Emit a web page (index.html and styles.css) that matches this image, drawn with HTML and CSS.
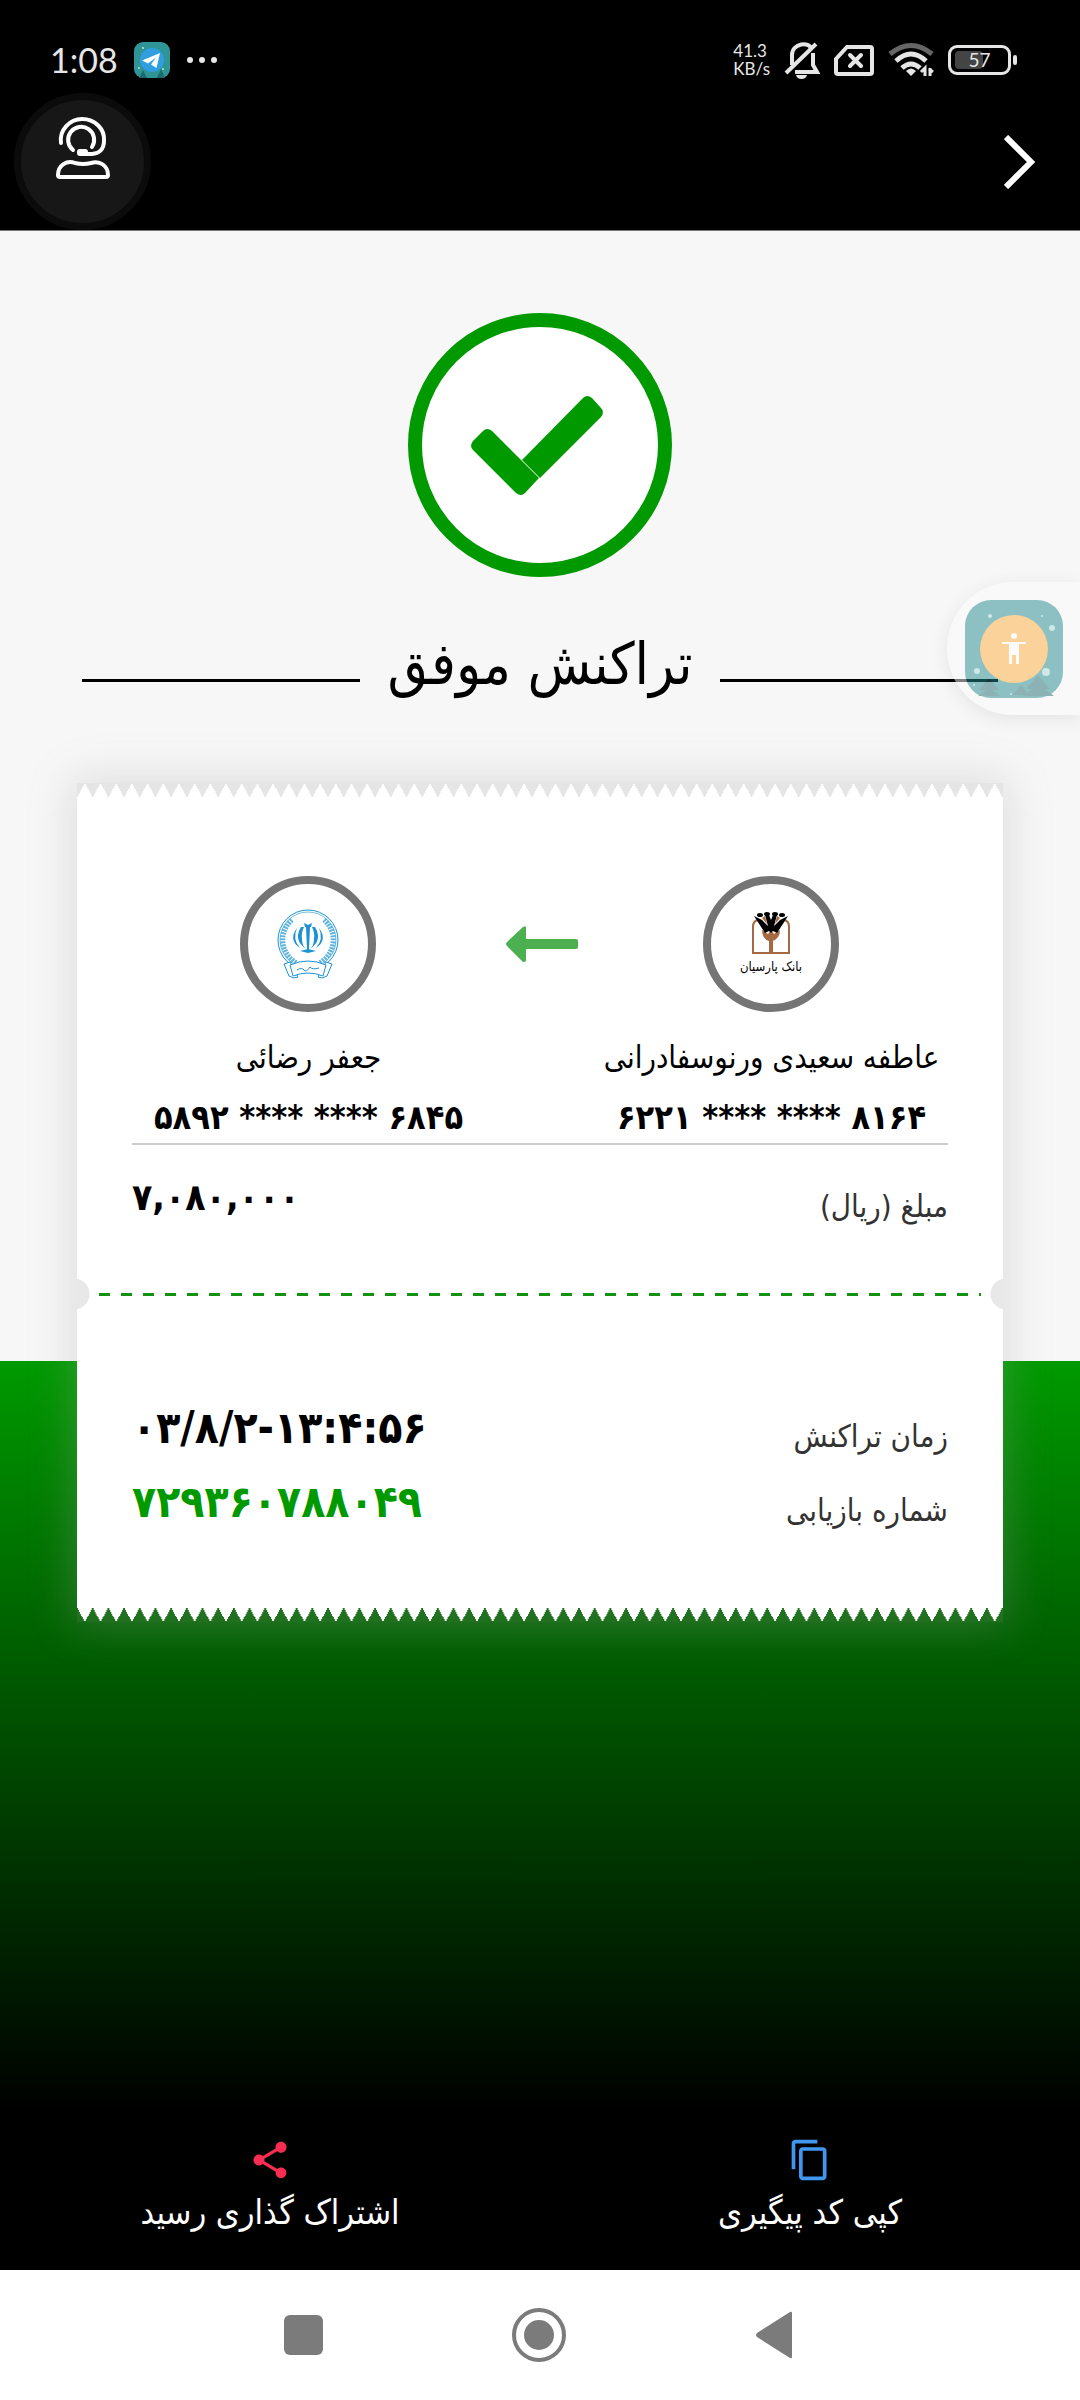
FILE: index.html
```html
<!DOCTYPE html>
<html lang="fa" dir="rtl">
<head>
<meta charset="utf-8">
<meta name="viewport" content="width=device-width, initial-scale=1">
<title>تراکنش موفق</title>
<link rel="stylesheet" href="styles.css">
</head>
<body>
<header class="top">
  <div class="status" dir="ltr">
    <div class="status-side status-start">
      <time class="clock">1:08</time>
      <svg class="app-badge" viewBox="0 0 36 36" aria-hidden="true"><rect width="36" height="36" rx="9" fill="#2f9496"/><path d="M5 36l4-8 4 8zM23 36l4-9 4 9z" fill="#1c6a70"/><circle cx="18" cy="18" r="12" fill="#2f9fe0"/><path d="M8 18.500L26 11l-3.500 15-5.500-3.500 5-7-8 6z" fill="#fff"/><circle cx="9" cy="6" r="1" fill="#bfe3e4"/><circle cx="5" cy="26" r="1" fill="#bfe3e4"/><circle cx="29" cy="27" r="1" fill="#bfe3e4"/></svg>
      <svg class="dots" viewBox="0 0 32 8" aria-hidden="true"><g fill="#e6e6e6"><circle cx="4" cy="4" r="3"/><circle cx="16" cy="4" r="3"/><circle cx="28" cy="4" r="3"/></g></svg>
    </div>
    <div class="status-side status-end">
      <span class="speed"><span>41.3</span><span>KB/s</span></span>
      <svg class="bell" viewBox="0 0 36 38" fill="none" stroke="#e6e6e6" stroke-width="4" aria-hidden="true"><path d="M8 24V14C8 2 26 0 27 8M29 12v12l4 7H11"/><path d="M2 32L32 3" stroke-width="4"/><path d="M12 34h11q-1 4-5.500 4t-5.500-4z" fill="#e6e6e6" stroke="none"/></svg>
      <svg class="sim" viewBox="0 0 40 31" fill="none" stroke="#e6e6e6" stroke-width="4" aria-hidden="true"><path d="M13 2h23q2 0 2 2v23q0 2-2 2H4q-2 0-2-2V14z"/><path d="M16 10l11 11M27 10L16 21" stroke-linecap="round"/></svg>
      <svg class="wifi" viewBox="0 0 46 36" fill="none" stroke="#e6e6e6" stroke-width="5" aria-hidden="true"><path d="M2 12q21-17 42 0" stroke="#666"/><path d="M8 19q15-14 30 0M14 26q9-8 18 0"/><path d="M18 29q5-5 10 0l-5 5z" fill="#e6e6e6" stroke="none"/><path d="M37 34v-8l-4 4M42 26v8M41 27l4 3" stroke-width="3"/></svg>
      <span class="battery"><span class="battery-level"></span><span class="battery-text">57</span></span>
    </div>
  </div>
  <div class="bar" dir="ltr">
    <button class="support" type="button" aria-label="پشتیبانی">
      <svg viewBox="0 0 54 62" fill="none" stroke="#fff" stroke-width="4" stroke-linecap="round" aria-hidden="true"><path d="M5 26C3 13 14 2 26 2c13 0 23 10 22 22 0 8-5 13-12 13H26"/><path d="M17 33a13 13 0 1 1 19-3"/><rect x="21" y="32" width="11" height="7" rx="3" fill="#fff" stroke="none"/><path d="M2 58c0-10 9-15 17-12q8 2 16 0c9-3 17 3 17 12q0 2-2 2H4q-2 0-2-2z"/></svg>
    </button>
    <button class="back" type="button" aria-label="بازگشت">
      <svg viewBox="0 0 32 54" fill="none" stroke="#fff" stroke-width="6" aria-hidden="true"><path d="M2 2l25 25L2 52"/></svg>
    </button>
  </div>
</header>

<main class="page">
  <svg class="success" viewBox="0 0 264 264" aria-hidden="true"><circle cx="132" cy="132" r="125" fill="#fff" stroke="#009a00" stroke-width="14"/><path d="M65 128l10-10q4-4 9 0l29 29 18 18-14 15q-4 4-9 0L65 137q-4-4 0-9z" fill="#009a00"/><path d="M114 147l61-62q4-4 9 0l9 10q4 4 0 9l-61 61z" fill="#009a00"/></svg>
  <h1 class="title"><span>تراکنش موفق</span></h1>

  <article class="receipt">
    <div class="teeth teeth-top"></div>
    <div class="receipt-body">
      <div class="parties">
        <section class="party">
          <svg class="bank" viewBox="0 0 137 137" role="img" aria-label="بانک پارسیان"><circle cx="68" cy="68" r="64" fill="#fff" stroke="#757575" stroke-width="8"/><g fill="none" stroke="#a66a42" stroke-width="2"><path d="M56 44q-6 0-6 7v26h17V62M80 44q6 0 6 7v26H69V62"/></g><path d="M59 54l6 4 3-4 3 4 6-4q0 9-8 11h-3q-7-2-7-11z" fill="#a66a42"/><path d="M51 40l8 4 6 6-3-11h4l2 5 2-5h4l-3 11 6-6 8-4-11 17-4-2-2 2-2-2-4 2z" fill="#000"/><g fill="#000"><ellipse cx="57" cy="39" rx="3" ry="2"/><ellipse cx="64" cy="38" rx="3" ry="2"/><ellipse cx="72" cy="38" rx="3" ry="2"/><ellipse cx="79" cy="39" rx="3" ry="2"/></g><path d="M59 42l3-2 2 8zM77 42l-3-2-2 8z" fill="#a66a42"/><text class="bank-name" x="68" y="95" text-anchor="middle">بانک پارسیان</text></svg>
          <h2 class="name">عاطفه سعیدی ورنوسفادرانی</h2>
          <p class="card-no" dir="ltr">۶۲۲۱ **** **** ۸۱۶۴</p>
        </section>
        <svg class="arrow" viewBox="0 0 72 36" fill="#4caf50" aria-hidden="true"><path d="M18 13h52q2 0 2 2v6q0 2-2 2H20v11q0 2-3 2L1 20q-2-2 0-4L17 1q3-2 3 1v11z"/></svg>
        <section class="party">
          <svg class="bank" viewBox="0 0 137 137" role="img" aria-label="بانک سپه"><circle cx="68" cy="68" r="64" fill="#fff" stroke="#757575" stroke-width="8"/><g fill="none" stroke="#1b93d3"><circle cx="68" cy="64" r="30" stroke-width="1"/><circle cx="68" cy="64" r="28" stroke-width="1" stroke-opacity=".6"/><path d="M52 44a26 26 0 0 0 5 43M84 44a26 26 0 0 1-5 43" stroke-width="5" stroke-dasharray="2 1" stroke-opacity=".7"/></g><g fill="#1b93d3"><path d="M66 51h4l-1 22-1 4-1-4zM64 47l4 2 4-2-1 4h-6zM60 75l8-2 8 2-8 2z"/><path d="M61 51q-8 13 5 22-4-3-4-10-1-6 2-12zM75 51q8 13-5 22 4-3 4-10 1-6-2-12zM57 52q-9 12 3 20-8-9-3-20zM79 52q9 12-3 20 8-9 3-20z"/></g><g fill="#fff" stroke="#1b93d3"><path d="M44 88l6-2 8 15-4 1-5-2zM92 88l-6-2-8 15 4 1 5-2z"/><path d="M50 89q18-8 36 0l-3 11q-15-6-30 0z"/></g><path d="M57 94q5-3 7 0t6-3q2 3 9 1" fill="none" stroke="#1b93d3"/></svg>
          <h2 class="name">جعفر رضائی</h2>
          <p class="card-no" dir="ltr">۵۸۹۲ **** **** ۶۸۴۵</p>
        </section>
      </div>
      <dl class="row amount">
        <dt>مبلغ (ریال)</dt>
        <dd dir="ltr">۷,۰۸۰,۰۰۰</dd>
      </dl>
      <div class="perforation"></div>
      <dl class="row">
        <dt>زمان تراکنش</dt>
        <dd dir="ltr">۰۳/۸/۲-۱۳:۴:۵۶</dd>
      </dl>
      <dl class="row code">
        <dt>شماره بازیابی</dt>
        <dd dir="ltr">۷۲۹۳۶۰۷۸۸۰۴۹</dd>
      </dl>
    </div>
    <div class="teeth teeth-bottom"></div>
  </article>

  <div class="actions">
    <button class="action" type="button">
      <svg viewBox="0 0 24 24" fill="#3f97f0" aria-hidden="true"><path d="M16 1H4c-1.100 0-2 .9-2 2v14h2V3h12V1zm3 4H8c-1.100 0-2 .9-2 2v14c0 1.100.9 2 2 2h11c1.100 0 2-.9 2-2V7c0-1.100-.9-2-2-2zm0 16H8V7h11v14z"/></svg>
      <span>کپی کد پیگیری</span>
    </button>
    <button class="action" type="button">
      <svg viewBox="0 0 24 24" fill="#fa2d50" aria-hidden="true"><path d="M18 16.080c-.76 0-1.440.3-1.960.77L8.910 12.700c.05-.23.09-.46.09-.7s-.04-.47-.09-.7l7.050-4.110c.54.5 1.250.81 2.040.81 1.660 0 3-1.340 3-3s-1.340-3-3-3-3 1.340-3 3c0 .24.04.47.09.7L8.040 9.810C7.500 9.310 6.790 9 6 9c-1.660 0-3 1.340-3 3s1.340 3 3 3c.79 0 1.500-.31 2.040-.81l7.120 4.160c-.05.21-.08.43-.08.65 0 1.610 1.310 2.920 2.920 2.920s2.920-1.310 2.920-2.920-1.310-2.920-2.920-2.920z"/></svg>
      <span>اشتراک گذاری رسید</span>
    </button>
  </div>

  <button class="float" type="button" aria-label="دسترس‌پذیری">
    <svg viewBox="0 0 98 98" aria-hidden="true"><rect width="98" height="98" rx="26" fill="#238b8f"/><g fill="#246f76"><path d="M24 78l10 12h-7l8 6H13l8-6h-7zM56 85l8 10H48zM73 75l12 14h-5l9 7H58l9-7h-6z"/></g><g fill="#a9d9db"><circle cx="25" cy="16" r="2"/><circle cx="12" cy="71" r="3"/><circle cx="81" cy="72" r="4"/><circle cx="87" cy="28" r="3"/><circle cx="77" cy="16" r="1"/><circle cx="9" cy="85" r="1"/><circle cx="46" cy="94" r="1"/></g><circle cx="49" cy="49" r="34" fill="#fdaf3f"/><g fill="#fff"><circle cx="49" cy="36" r="3"/><path d="M37 42h24v2h-7v20h-3v-9h-4v9h-3V44h-7z"/></g></svg>
  </button>
</main>

<nav class="nav" dir="ltr">
  <button type="button" aria-label="Recents"><svg viewBox="0 0 56 56" fill="#7b7b7b"><rect x="8" y="8" width="39" height="40" rx="6"/></svg></button>
  <button type="button" aria-label="Home"><svg viewBox="0 0 56 56"><circle cx="27" cy="28" r="25" fill="none" stroke="#7b7b7b" stroke-width="4"/><circle cx="27" cy="28" r="15" fill="#7b7b7b"/></svg></button>
  <button type="button" aria-label="Back"><svg viewBox="0 0 56 56" fill="#7b7b7b"><path d="M9 26L42 5q2-1 2 1v44q0 2-2 1L9 30q-2-2 0-4z"/></svg></button>
</nav>
</body>
</html>
```
FILE: styles.css
```css
* { box-sizing: border-box; }

body {
  margin: 0;
  min-height: 100vh;
  display: flex;
  flex-direction: column;
  background: #000;
  color: #000;
  font-family: "DejaVu Sans Condensed", "DejaVu Sans", sans-serif;
}

h1, h2, p, dl, dd { margin: 0; font-weight: 400; }
svg { display: block; }

button {
  padding: 0;
  border: 0;
  background: none;
  color: inherit;
  font: inherit;
}

/* Header */
.top { border-bottom: 1px solid #777; }

.status {
  display: flex;
  justify-content: space-between;
  align-items: flex-end;
  height: 93px;
  padding: 0 63px 14px 50px;
  color: #e6e6e6;
}
.status-side { display: flex; align-items: center; height: 38px; }
.status-start { gap: 16px; }
.status-end { gap: 14px; }
.clock { font: 34px/36px Lato, sans-serif; }
.app-badge { width: 36px; height: 36px; }
.dots { width: 32px; height: 8px; }
.speed { display: flex; flex-direction: column; font: 17px/18px Lato, sans-serif; }
.bell { width: 36px; height: 38px; }
.sim { width: 40px; height: 31px; }
.wifi { width: 46px; height: 36px; }
.battery {
  position: relative;
  display: flex;
  align-items: center;
  justify-content: center;
  width: 63px;
  height: 30px;
  margin-right: 6px;
  border: 3px solid #e6e6e6;
  border-radius: 9px;
}
.battery::after {
  content: "";
  position: absolute;
  right: -9px;
  width: 4px;
  height: 10px;
  border-radius: 2px;
  background: #e6e6e6;
}
.battery-level {
  position: absolute;
  left: 4px;
  width: 28px;
  height: 18px;
  border-radius: 4px;
  background: #444;
}
.battery-text { position: relative; font: 19px/20px Lato, sans-serif; }

.bar {
  display: flex;
  justify-content: space-between;
  align-items: center;
  padding: 0 44px 0 14px;
}
.support {
  display: grid;
  justify-items: center;
  width: 137px;
  height: 137px;
  padding-top: 17px;
  border: 7px solid #0b0b0b;
  border-radius: 50%;
  background: #171717;
}
.support svg { width: 54px; height: 62px; }
.back svg { width: 32px; height: 54px; }

/* Page */
.page {
  position: relative;
  flex: 1;
  display: flex;
  flex-direction: column;
  padding-top: 82px;
  background: linear-gradient(#f7f7f7 1130px, #009a00 1130px, #000 1880px);
}
.success { width: 264px; height: 264px; align-self: center; }

.title {
  display: flex;
  align-items: center;
  gap: 28px;
  height: 80px;
  margin: 63px 82px 0;
  font-size: 58px;
  line-height: 80px;
}
.title span { padding-bottom: 32px; }
.title::before, .title::after {
  content: "";
  flex: 1;
  height: 3px;
  background: #000;
}

/* Receipt */
.receipt {
  margin: 63px 77px 0;
  box-shadow: 0 0 40px 4px rgba(160, 160, 160, .3);
}
.teeth {
  height: 15px;
  background-color: rgba(160, 160, 160, .2);
  background-size: calc(100% / 59) 100%;
}
.teeth-top { background-image: conic-gradient(from 152deg at 50% 0, #fff 56deg, transparent 0); }
.teeth-bottom { background-image: conic-gradient(from 332deg at 50% 100%, #fff 56deg, transparent 0); }
.receipt-body { padding: 78px 0 68px; background: #fff; }

.parties {
  position: relative;
  display: grid;
  grid-template-columns: 1fr 1fr;
}
.parties::after {
  content: "";
  grid-column: 1 / -1;
  height: 2px;
  margin: 0 55px;
  background: #ccc;
}
.party { display: flex; flex-direction: column; align-items: center; }
.bank { width: 137px; height: 137px; }
.bank-name { font-size: 13px; }
.arrow {
  position: absolute;
  top: 50px;
  left: 50%;
  width: 72px;
  height: 36px;
  margin-left: -34px;
}
.name { margin-top: 20px; font-size: 31px; line-height: 48px; }
.card-no { height: 62px; font-size: 34px; line-height: 72px; font-weight: 700; }

.row {
  display: flex;
  justify-content: space-between;
  align-items: center;
  height: 74px;
  padding: 0 55px;
}
dt { padding-top: 16px; color: #333; font-size: 31px; line-height: 48px; }
dd { font-size: 44px; line-height: 56px; font-weight: 700; }
.amount { height: 106px; }
.amount dd { font-size: 37px; }
.code dd { color: #009a00; }

.perforation {
  height: 86px;
  margin-bottom: 54px;
  background:
    radial-gradient(circle 16px at -3px 50%, #e8e8e8 15px, transparent 16px),
    radial-gradient(circle 16px at calc(100% + 3px) 50%, #e8e8e8 15px, transparent 16px),
    repeating-linear-gradient(90deg, #119311 0 11px, transparent 11px 22px) 50% 50% / calc(100% - 44px) 3px no-repeat;
}

/* Actions */
.actions {
  display: grid;
  grid-template-columns: 1fr 1fr;
  margin-top: auto;
  padding-bottom: 34px;
}
.action {
  display: flex;
  flex-direction: column;
  align-items: center;
  gap: 6px;
  color: #fff;
  font-size: 34px;
  line-height: 48px;
}
.action svg { width: 44px; height: 44px; }

/* Floating accessibility shortcut */
.float {
  position: absolute;
  top: 351px;
  right: 0;
  width: 133px;
  height: 133px;
  padding: 0 17px 0 18px;
  border-radius: 66px 0 0 66px;
  background: #fbfbfb;
  box-shadow: 0 4px 16px rgba(0, 0, 0, .14);
  opacity: .5;
}
.float svg { width: 98px; height: 98px; }

/* System navigation */
.nav {
  display: flex;
  justify-content: center;
  gap: 180px;
  height: 130px;
  align-items: center;
  background: #fff;
}
.nav svg { width: 56px; height: 56px; }
```
